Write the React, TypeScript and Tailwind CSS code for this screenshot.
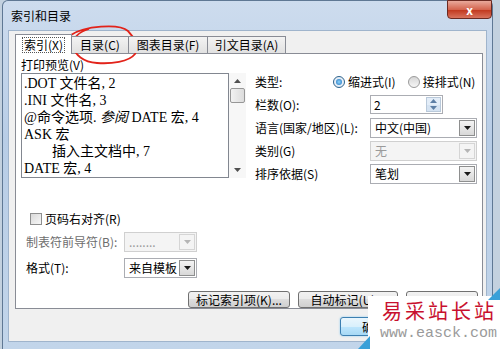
import type { ReactNode } from 'react';

const UI = "font-['Noto_Sans_CJK_SC','Microsoft_YaHei',sans-serif]";
const BTN = 'bg-[linear-gradient(#f2f2f2_0%,#ebebeb_50%,#dddddd_50%,#cfcfcf_100%)]';

function Arrow({ up, color = '#1a1a1a' }: { up?: boolean; color?: string }) {
  return (
    <svg width="7" height="4" viewBox="0 0 7 4">
      <path d={up ? 'M0 4h7L3.5 0z' : 'M0 0h7L3.5 4z'} fill={color} />
    </svg>
  );
}

function Select({ value, className, disabled }: { value: string; className: string; disabled?: boolean }) {
  return (
    <div
      className={`flex h-[20px] items-center border ${className} ${
        disabled ? 'border-[#d0d0d0] bg-[#f4f4f4] text-[#9a9a9a]' : 'border-[#abadb3] bg-white text-black'
      }`}
    >
      <span className="flex-1 pl-[4px] text-[12px] leading-[14px]">{value}</span>
      <div
        className={`mr-[1px] flex h-[16px] w-[16px] items-center justify-center border ${
          disabled
            ? 'border-[#d5d5d5] bg-[#f4f4f4]'
            : 'border-[#8e8f8f] bg-[linear-gradient(#f4f4f4,#d8d8d8)]'
        }`}
      >
        <Arrow color={disabled ? '#b5b5b5' : '#1a1a1a'} />
      </div>
    </div>
  );
}

function Radio({ checked }: { checked?: boolean }) {
  return (
    <div
      className={`flex h-[12px] w-[12px] items-center justify-center rounded-full border ${
        checked ? 'border-[#2c628b] bg-[#e6eef7]' : 'border-[#9a9a9a] bg-[linear-gradient(#d6d6d6,#f6f6f6)]'
      }`}
    >
      {checked && <div className="h-[6px] w-[6px] rounded-full bg-[radial-gradient(#8fd5fb,#1c6fbd)]" />}
    </div>
  );
}

function Row({ children }: { children: ReactNode }) {
  return <div className="flex h-[19px] items-center text-[12px] leading-[14px]">{children}</div>;
}

function Button({ children, className }: { children?: ReactNode; className: string }) {
  return (
    <div
      className={`flex h-[17px] items-center justify-center rounded-[3px] border border-[#707070] text-[12px] leading-[14px] ${BTN} ${className}`}
    >
      {children}
    </div>
  );
}

const LINES: { text: ReactNode; indent?: boolean }[] = [
  { text: '.DOT 文件名, 2' },
  { text: '.INI 文件名, 3' },
  {
    text: (
      <>
        @命令选项. <i>参阅</i> DATE 宏, 4
      </>
    ),
  },
  { text: 'ASK 宏' },
  { text: '插入主文档中, 7', indent: true },
  { text: 'DATE 宏, 4' },
];

export default function App() {
  return (
    <div className={`relative h-[349px] w-[500px] overflow-hidden bg-[#c3d1df] ${UI}`}>
      <div className="ml-[2px] flex h-[349px] w-[491px] flex-col rounded-t-[6px] border-x border-t border-[#5f7894] bg-[linear-gradient(#cddcee,#b8cde6_40%,#c2d5ea)]">
        {/* title bar */}
        <div className="relative h-[29px]">
          <span className="absolute left-[8px] top-[8px] text-[12px] leading-[14px] text-black">索引和目录</span>
          <div className="absolute right-[0px] top-[-1px] flex h-[19px] w-[45px] items-center justify-center rounded-b-[4px] border border-[#6b2a22] bg-[linear-gradient(#e9a99b,#d4654f_50%,#c23a20_55%,#d8735d)]">
            <span className="text-[12px] font-bold leading-[12px] text-white">x</span>
          </div>
        </div>

        {/* client area */}
        <div className="ml-[5px] h-[312px] w-[479px] border border-[#9fb4cc] bg-[#f0f0f0] pl-[6px] pt-[2px]">
          {/* tabs */}
          <div className="relative z-10 flex h-[20px] items-end text-[12px] leading-[14px]">
            <div className="-mb-px flex h-[20px] w-[57px] items-center justify-center border border-b-0 border-[#898c95] bg-white">
              <span className="border border-dotted border-[#555] px-[1px]">索引(X)</span>
            </div>
            <div className="-ml-px flex h-[17px] w-[58px] items-center justify-center border border-b-0 border-[#898c95] bg-[linear-gradient(#f3f3f3,#e1e1e1)]">
              目录(C)
            </div>
            <div className="-ml-px flex h-[17px] w-[80px] items-center justify-center border border-b-0 border-[#898c95] bg-[linear-gradient(#f3f3f3,#e1e1e1)]">
              图表目录(F)
            </div>
            <div className="-ml-px flex h-[17px] w-[79px] items-center justify-center border border-b-0 border-[#898c95] bg-[linear-gradient(#f3f3f3,#e1e1e1)]">
              引文目录(A)
            </div>
          </div>

          {/* tab panel */}
          <div className="h-[256px] w-[468px] border border-[#898c95] bg-white pl-[5px] pt-[3px] text-black">
            <div className="flex">
              <div className="w-[225px]">
                <div className="h-[16px] text-[12px] leading-[16px]">打印预览(V)</div>
                <div className="flex h-[105px]">
                  <div className="w-[208px] border border-[#828790] bg-white pl-[2px] pt-[1px] font-['Liberation_Serif','Noto_Sans_CJK_SC',serif] text-[14px] leading-[17px]">
                    {LINES.map((l, i) => (
                      <div key={i} className={l.indent ? 'pl-[28px]' : ''}>
                        {l.text}
                      </div>
                    ))}
                  </div>
                  <div className="flex w-[17px] flex-col bg-[#f7f7f7]">
                    <div className="flex h-[15px] items-center justify-center">
                      <Arrow up color="#505050" />
                    </div>
                    <div className="mx-[1px] h-[15px] rounded-[2px] border border-[#979797] bg-[linear-gradient(90deg,#f2f2f2,#dcdcdc)]" />
                    <div className="flex-1" />
                    <div className="flex h-[16px] items-center justify-center">
                      <Arrow color="#505050" />
                    </div>
                  </div>
                </div>
              </div>

              <div className="ml-[9px] flex flex-col gap-[4px] pt-[15px]">
                <Row>
                  <span className="w-[78px]">类型:</span>
                  <Radio checked />
                  <span className="ml-[3px]">缩进式(I)</span>
                  <span className="ml-[12px]">
                    <Radio />
                  </span>
                  <span className="ml-[3px]">接排式(N)</span>
                </Row>
                <Row>
                  <span className="w-[115px]">栏数(O):</span>
                  <div className="flex h-[19px] w-[73px] items-center border border-[#abadb3] bg-white">
                    <span className="flex-1 pl-[3px]">2</span>
                    <div className="mr-[1px] flex h-[15px] w-[15px] flex-col border border-[#b9c9da]">
                      <div className="flex flex-1 items-center justify-center bg-[#e3edf8]">
                        <Arrow up color="#5d7fa5" />
                      </div>
                      <div className="flex flex-1 items-center justify-center bg-[#d5e3f2]">
                        <Arrow color="#5d7fa5" />
                      </div>
                    </div>
                  </div>
                </Row>
                <Row>
                  <span className="w-[115px]">语言(国家/地区)(L):</span>
                  <Select value="中文(中国)" className="w-[107px]" />
                </Row>
                <Row>
                  <span className="w-[115px]">类别(G)</span>
                  <Select value="无" className="w-[107px]" disabled />
                </Row>
                <Row>
                  <span className="w-[115px]">排序依据(S)</span>
                  <Select value="笔划" className="w-[107px]" />
                </Row>
              </div>
            </div>

            <div className="mt-[29px] flex h-[14px] items-center pl-[9px] text-[12px] leading-[14px]">
              <div className="h-[12px] w-[12px] border border-[#8e8f8f] bg-[linear-gradient(135deg,#d9d9d9,#f7f7f7)]" />
              <span className="ml-[3px]">页码右对齐(R)</span>
            </div>
            <div className="mt-[6px] flex h-[20px] items-center pl-[5px] text-[12px] leading-[14px]">
              <span className="w-[98px] text-[#6d6d6d]">制表符前导符(B):</span>
              <Select value="........" className="w-[73px]" disabled />
            </div>
            <div className="mt-[6px] flex h-[20px] items-center pl-[5px] text-[12px] leading-[14px]">
              <span className="w-[98px]">格式(T):</span>
              <Select value="来自模板" className="w-[73px]" />
            </div>
            <div className="mt-[13px] flex gap-[8px] pl-[167px]">
              <Button className="w-[102px]">标记索引项(K)...</Button>
              <Button className="w-[100px]">自动标记(U)...</Button>
              <Button className="w-[72px]" />
            </div>
          </div>

          {/* dialog buttons, mostly hidden behind the watermark */}
          <div className="mt-[8px] flex gap-[8px] pl-[325px]">
            <div className="flex h-[19px] w-[75px] items-center justify-start rounded-[3px] border border-[#3c7fb1] bg-[linear-gradient(#eaf6fd_0%,#d9f0fc_50%,#bee6fd_50%,#a7d9f5_100%)] pl-[21px] text-[12px] leading-[14px] shadow-[0_0_2px_#7fc4ee]">
              确
            </div>
            <div className={`h-[19px] w-[60px] rounded-[3px] border border-[#707070] ${BTN}`} />
          </div>
        </div>
      </div>

      {/* red hand-drawn circle */}
      <svg className="pointer-events-none absolute left-0 top-0" width="500" height="349" viewBox="0 0 500 349">
        <path
          d="M71 35 C 84 26, 119 23, 128 31 C 134 37, 139 47, 135 54 C 129 62, 111 64, 97 63 C 83 62, 75 55, 73 46 C 72 39, 78 32, 89 29"
          fill="none"
          stroke="#e2231a"
          strokeWidth="1.8"
        />
      </svg>

      {/* watermark */}
      <div className="absolute left-[368px] top-[296px] h-[53px] w-[132px] bg-white">
        <div className="pl-[14px] pt-[3px] text-[20px] leading-[24px] tracking-[3px] text-[#c8102e]">易采站长站</div>
        <div className="pl-[12px] pt-[1px] font-['Liberation_Mono',monospace] text-[15px] leading-[20px] text-[#9a9a9a]">
          www.easck.com
        </div>
      </div>
      <svg className="pointer-events-none absolute left-0 top-0" width="500" height="349" viewBox="0 0 500 349">
        <path d="M358 349 L370 336 L370 349 Z" fill="#3aa0d8" />
        <path d="M488 300 L500 288 L500 300 Z" fill="#3aa0d8" />
      </svg>
    </div>
  );
}
